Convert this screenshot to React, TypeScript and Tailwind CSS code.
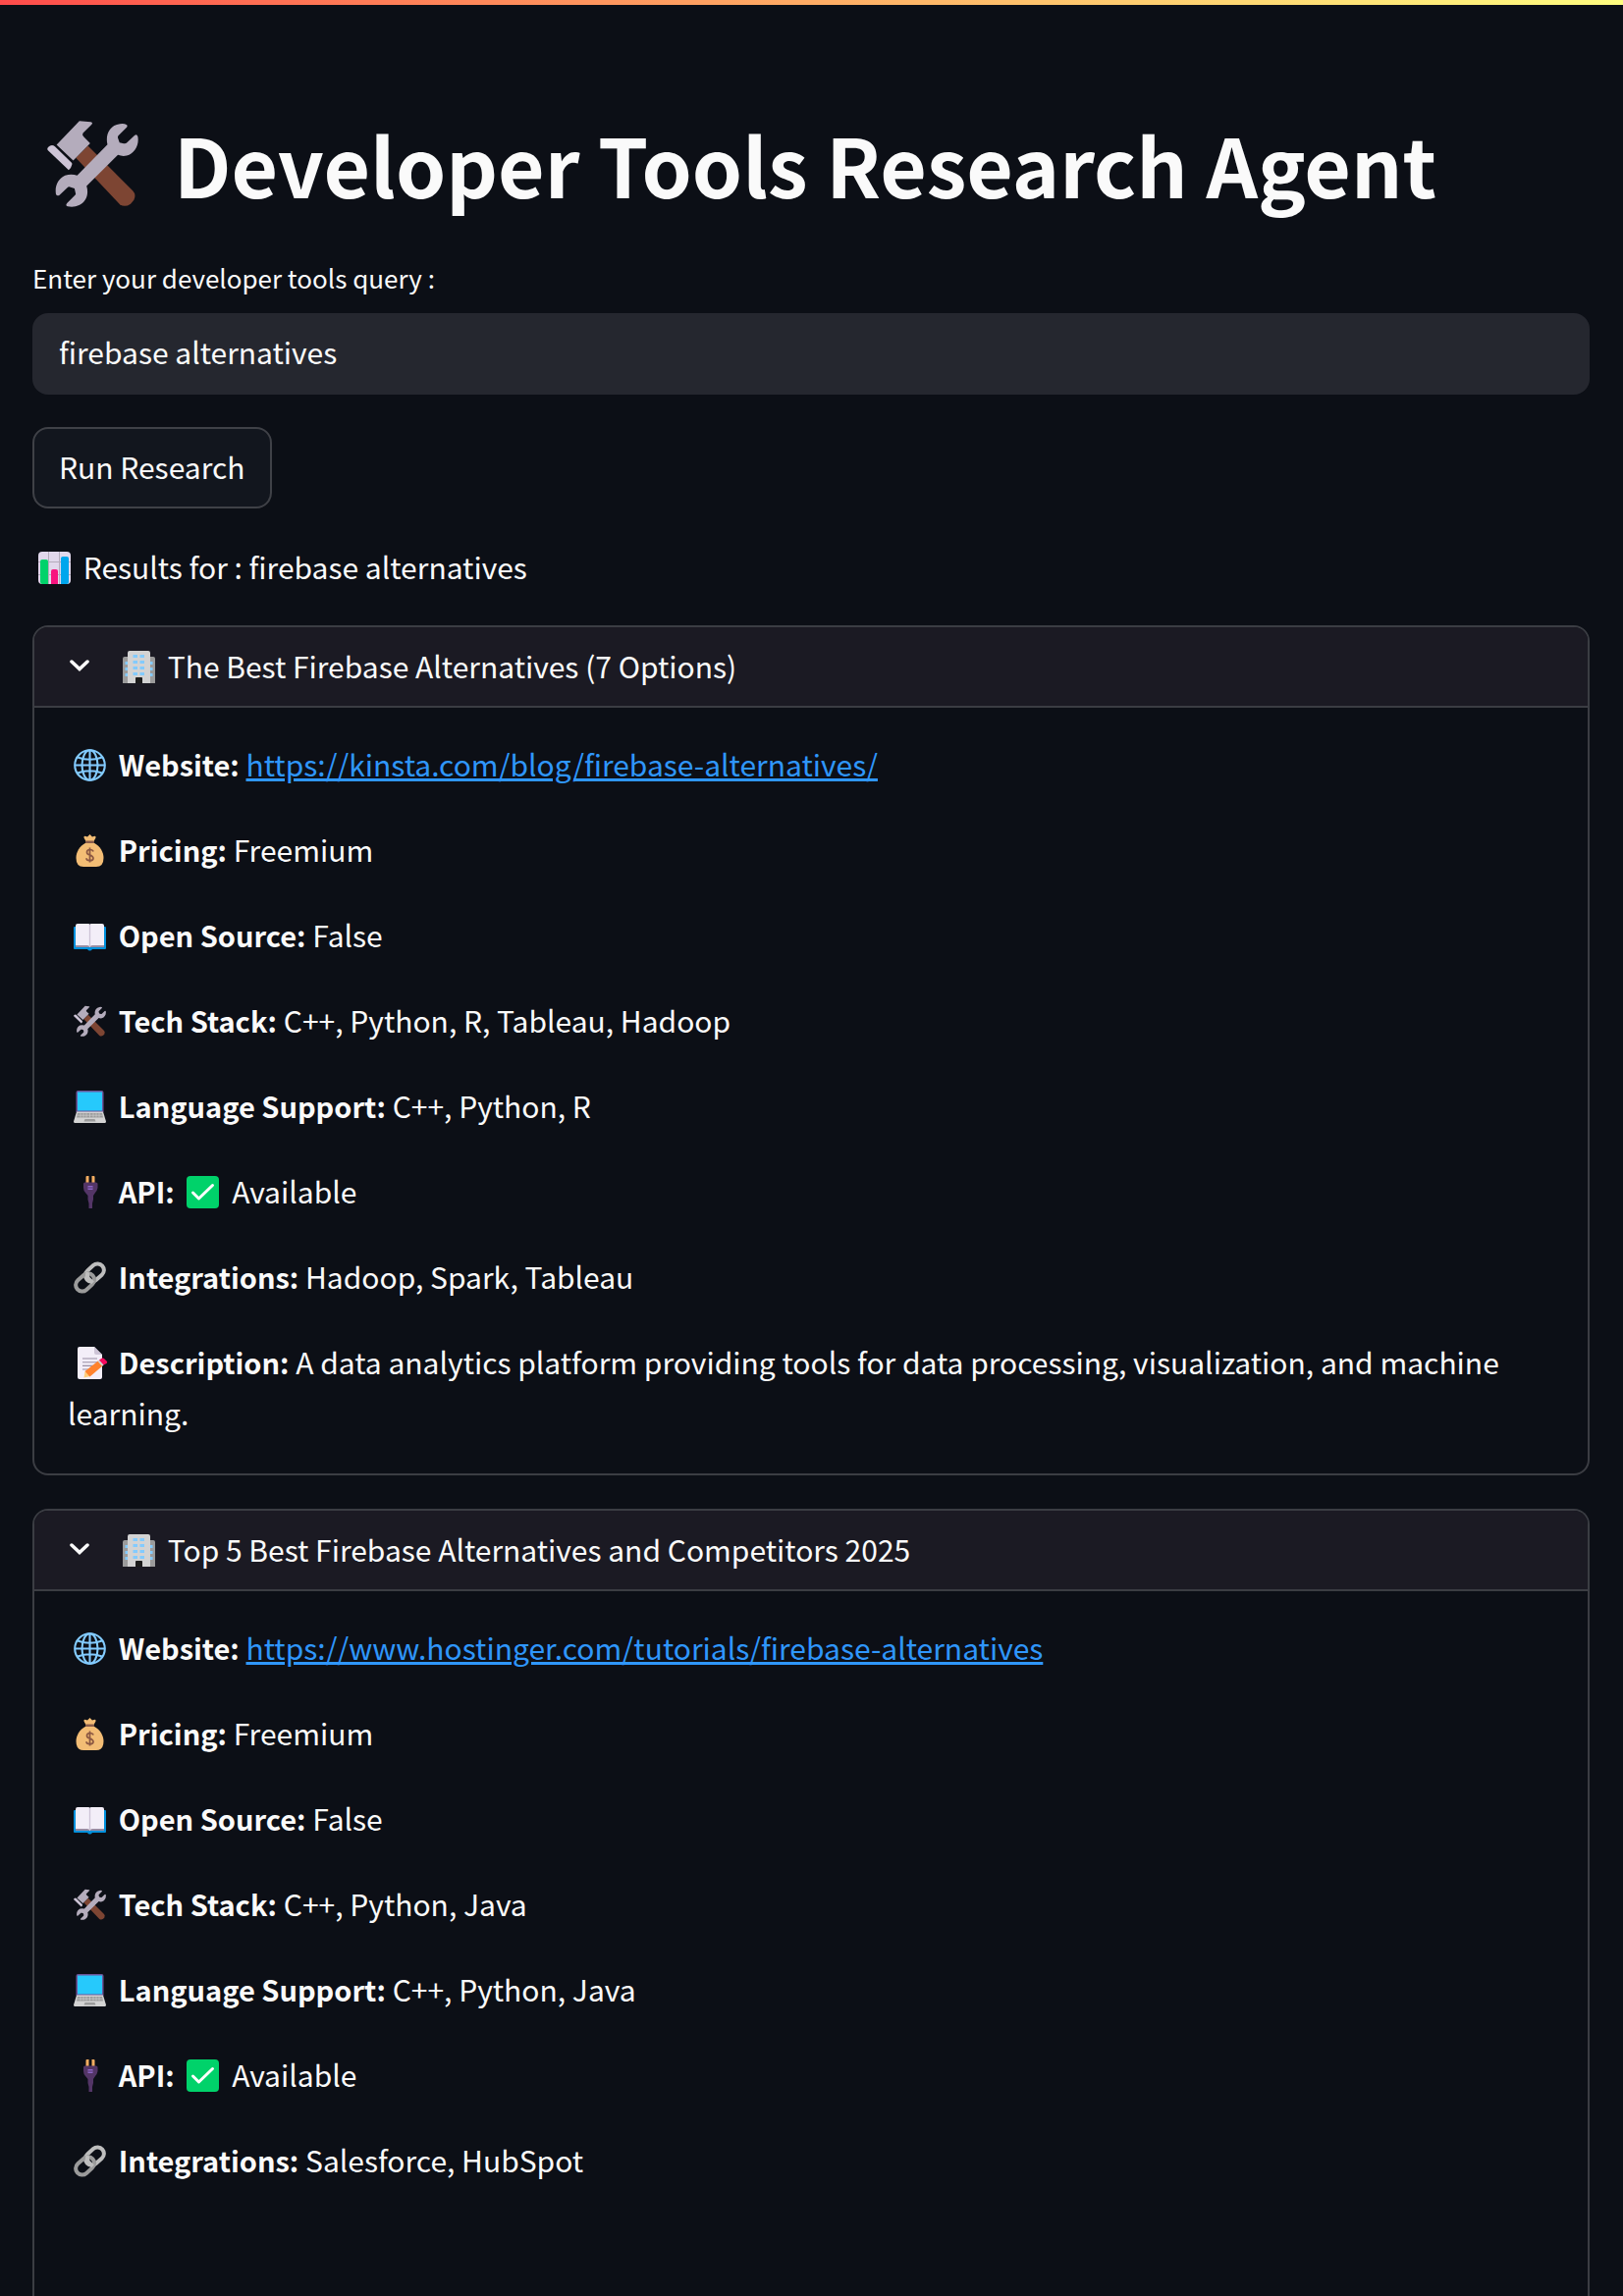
import React from "react";

const iconClass = "mx-[6px] inline-block size-[33px] align-[-5px]";

function Tools({ className = iconClass }: { className?: string }) {
  return (
    <svg className={className} viewBox="84 68 280 280" aria-hidden="true">
      <path d="M172 188 209 151 347 289Q358 301 350 317L340 329Q323 341 307 331Z" fill="#7d4533" />
      <path d="M183 75 218 78Q226 80 220 86L194 112Q190 118 196 123L216 143 164 196 113 148Z" fill="#b4acbc" />
      <path d="M87 155Q98 145 108 153L159 203Q162 206 159 212 157 222 150 225L86 164Q83 160 87 155Z" fill="#cdc4d6" />
      <path
        d="M269 147C262 118 275 88 307 84Q320 82 327 86 332 89 328 94L303 119Q300 122 301 127L306 141 319 144Q325 145 328 142L352 119Q359 114 362 122C367 148 353 174 328 181Q315 184 301 179L205 274C213 300 203 323 182 333Q166 341 147 337 139 334 145 327L169 303Q173 299 171 295L168 282 154 277Q149 276 145 280L122 302Q114 307 111 299C107 275 117 252 139 242Q158 236 176 242Z"
        fill="#b4acbc"
      />
    </svg>
  );
}

function Chart() {
  return (
    <svg className={iconClass} viewBox="0 0 33 33" aria-hidden="true">
      <rect width="33" height="33" rx="4" fill="#e1d8ec" />
      <path d="M0 10.500H33M0 23.500H33M10.500 0V33M21.500 0V33" stroke="#b4acbc" strokeWidth="1" />
      <path d="M2 10Q2 8 4 8H8Q10 8 10 10V33H4Q2 33 2 31Z" fill="#00d26a" />
      <path d="M13 20Q13 18 15 18H18Q20 18 20 20V33H13Z" fill="#f8137f" />
      <path d="M23 7Q23 5 25 5H29Q31 5 31 7V31Q31 33 29 33H23Z" fill="#00a6ed" />
    </svg>
  );
}

function Building() {
  return (
    <svg className={iconClass} viewBox="0 0 33 33" aria-hidden="true">
      <path d="M0 8Q0 6 2 6H31Q33 6 33 8V33H0Z" fill="#9b9b9b" />
      <path d="M5 2Q5 0 7 0H26Q28 0 28 2V33H20V28Q20 27 19 27H14Q13 27 13 28V33H5Z" fill="#d3d3d3" />
      <path d="M13 28Q13 27 14 27H19Q20 27 20 28V33H13Z" fill="#1c1c1c" />
      <path
        d="M10.500 4h4.500v3h-4.500zM17.500 4h4.500v3h-4.500zM10.500 10h4.500v3h-4.500zM17.500 10h4.500v3h-4.500zM10.500 16h4.500v3h-4.500zM17.500 16h4.500v3h-4.500zM10.500 22h4.500v3h-4.500zM17.500 22h4.500v3h-4.500zM2.500 11H5v3H2.500zM2.500 17H5v3H2.500zM2.500 23H5v3H2.500zM28 11h2.500v3H28zM28 17h2.500v3H28zM28 23h2.500v3H28z"
        fill="#83cbff"
      />
    </svg>
  );
}

function Globe() {
  return (
    <svg className={iconClass} viewBox="0 0 33 33" fill="none" stroke="#83cbff" strokeWidth="2.100" aria-hidden="true">
      <circle cx="16.500" cy="16.500" r="15.300" />
      <ellipse cx="16.500" cy="16.500" rx="8" ry="15.300" />
      <path d="M16.500 1V32M1 16.500H32M4 8.500Q16.500 13 29 8.500M4 24.500Q16.500 20 29 24.500" />
    </svg>
  );
}

function MoneyBag() {
  return (
    <svg className={iconClass} viewBox="0 0 33 33" aria-hidden="true">
      <path d="M13 8 10.500 3.500Q10 1 12.500 2L14 2.500 16.500 0 19 2.500 20.500 2Q23 1 22.500 3.500L20 8Z" fill="#f3bd75" />
      <path d="M12.500 8.500C6 12 2.500 18 2.500 24Q2.500 33 10 33H23Q30.500 33 30.500 24C30.500 18 27 12 20.500 8.500Z" fill="#f3bd75" />
      <rect x="12" y="6.500" width="9" height="2.500" rx="1.200" fill="#8b5e4b" />
      <path d="M20 17.500Q19.500 15.500 16.500 15.500T13.500 18.300Q13.500 20.300 16.500 21T20 24.200Q20 26.700 16.500 26.700T13 24.300M16.500 13.500V28.500" fill="none" stroke="#8b5742" strokeWidth="1.700" />
    </svg>
  );
}

function Book() {
  return (
    <svg className={iconClass} viewBox="0 0 33 33" aria-hidden="true">
      <path d="M0 8Q0 7 1 7H32Q33 7 33 8V29Q33 30 32 30H19Q18 31.500 16.500 31.500T14 30H1Q0 30 0 29Z" fill="#0090dc" />
      <path d="M2 6V28H31V6Z" fill="#998ea4" />
      <path d="M2 6Q2 4 4 4H15Q16.500 4 16.500 5 16.500 4 18 4H29Q31 4 31 6V26H19Q17 26 16.500 28 16 26 14 26H2Z" fill="#f3eef8" />
      <path d="M16.500 5V27" stroke="#cdc4d6" strokeWidth="1.300" />
    </svg>
  );
}

function Laptop() {
  return (
    <svg className={iconClass} viewBox="0 0 33 33" aria-hidden="true">
      <path d="M2.500 2Q2.500 0 4.500 0H28.500Q30.500 0 30.500 2V22H2.500Z" fill="#6d5599" />
      <rect x="4" y="1.500" width="25" height="19" fill="#26c9fc" />
      <path d="M3 21.500H30L33 31.500Q33 33 31.500 33H1.500Q0 33 0 31.500Z" fill="#d3d3d3" />
      <path d="M4 23H29L30 27.500H3Z" fill="#9b9b9b" />
      <path d="M3.500 25.200H29.500M7 23V27.500M10 23V27.500M13 23V27.500M16.500 23V27.500M20 23V27.500M23 23V27.500M26 23V27.500" stroke="#d3d3d3" strokeWidth=".6" />
      <path d="M11.500 29H21.500L22.500 31.500H10.500Z" fill="#9b9b9b" />
    </svg>
  );
}

function Plug() {
  return (
    <svg className={iconClass} viewBox="0 0 33 33" aria-hidden="true">
      <path d="M12.500 1Q12.500 0 13.500 0H15.500V7H12.500ZM18.500 0H20.500Q21.500 0 21.500 1V7H18.500Z" fill="#f3ad61" />
      <path d="M10 8Q10 6.500 11.500 6.500H22.500Q24.500 6.500 24.500 8V12Q24 15 22 17L20 20V24L19 28V33H15.500V28L14.500 24V20L12 17Q10 15 10 12Z" fill="#533566" />
      <path d="M14.500 10H19.500V14H14.500Z" fill="#8d65c5" />
      <path d="M14.500 12H19.500" stroke="#533566" strokeWidth="1" />
    </svg>
  );
}

function Chain() {
  return (
    <svg className={iconClass} viewBox="0 0 33 33" fill="none" strokeWidth="4" aria-hidden="true">
      <rect x="-10.500" y="-6.500" width="21" height="13" rx="6.500" transform="translate(21.400 11.600) rotate(-42)" stroke="#bebebe" />
      <rect x="-10.500" y="-6.500" width="21" height="13" rx="6.500" transform="translate(11.600 21.400) rotate(-42)" stroke="#9b9b9b" />
      <path d="M19.500 21.800 15 17.300Q13 14.500 14.500 11" stroke="#bebebe" />
    </svg>
  );
}

function Memo() {
  return (
    <svg className={iconClass} viewBox="0 0 33 33" overflow="visible" aria-hidden="true">
      <path d="M4 2Q4 0 6 0H21L29 8V31Q29 33 27 33H6Q4 33 4 31Z" fill="#f3eef8" />
      <path d="M21 0 29 8H23Q21 8 21 6Z" fill="#cdc4d6" />
      <path d="M9 12H24M9 15.700H24M9 19.400H21M9 23H17" stroke="#998ea4" strokeWidth="1.100" />
      <path d="M11.500 25 10.500 31.500 17 30Z" fill="#ffce7c" />
      <path d="M11.500 25 25.500 14 30 19 16.500 30.500Z" fill="#ff822d" />
      <path d="M24.500 14.800 26.500 13.200 31 18 29 19.800Z" fill="#d3d3d3" />
      <path d="M26 13.500 28.500 11.800Q30 11 31.500 12.500L34 15Q34.500 16 33.500 17L30.500 18.500Z" fill="#f70a5d" />
    </svg>
  );
}

function Check() {
  return (
    <svg className={iconClass} viewBox="0 0 33 33" aria-hidden="true">
      <rect width="33" height="33" rx="4" fill="#00d26a" />
      <path d="M6.500 17 12.500 23 26.500 9.500" fill="none" stroke="#fff" strokeWidth="3" strokeLinecap="round" strokeLinejoin="round" />
    </svg>
  );
}

type Company = {
  name: string;
  website: string;
  pricing: string;
  openSource: string;
  techStack: string;
  languages: string;
  integrations: string;
  description?: string;
};

const companies: Company[] = [
  {
    name: "The Best Firebase Alternatives (7 Options)",
    website: "https://kinsta.com/blog/firebase-alternatives/",
    pricing: "Freemium",
    openSource: "False",
    techStack: "C++, Python, R, Tableau, Hadoop",
    languages: "C++, Python, R",
    integrations: "Hadoop, Spark, Tableau",
    description:
      "A data analytics platform providing tools for data processing, visualization, and machine learning.",
  },
  {
    name: "Top 5 Best Firebase Alternatives and Competitors 2025",
    website: "https://www.hostinger.com/tutorials/firebase-alternatives",
    pricing: "Freemium",
    openSource: "False",
    techStack: "C++, Python, Java",
    languages: "C++, Python, Java",
    integrations: "Salesforce, HubSpot",
  },
];

function Field({ icon, label, children }: { icon: React.ReactNode; label: string; children: React.ReactNode }) {
  return (
    <p>
      {icon} <strong className="text-[29px] font-bold">{label}:</strong> {children}
    </p>
  );
}

function CompanyCard({ company, className }: { company: Company; className: string }) {
  return (
    <details open className={`overflow-hidden border-2 border-[#3b3d43] ${className}`}>
      <summary className="flex h-[82px] cursor-pointer list-none items-center border-b-2 border-[#3b3d43] bg-[#1b1a23] pb-[2px] pl-[36px]">
        <svg className="mr-[28px] h-[12px] w-[20px]" viewBox="0 0 20 12" fill="none" stroke="#fafafa" strokeWidth="3.500" aria-hidden="true">
          <path d="M2 2 10 9.500 18 2" strokeLinecap="round" />
        </svg>
        <span>
          <Building /> {company.name}
        </span>
      </summary>
      <div className="flex flex-col gap-[35px] px-[34px] pt-[31px] pb-[36px]">
        <Field icon={<Globe />} label="Website">
          <a href={company.website} className="text-[#2f96fb] underline">
            {company.website}
          </a>
        </Field>
        <Field icon={<MoneyBag />} label="Pricing">{company.pricing}</Field>
        <Field icon={<Book />} label="Open Source">{company.openSource}</Field>
        <Field icon={<Tools />} label="Tech Stack">{company.techStack}</Field>
        <Field icon={<Laptop />} label="Language Support">{company.languages}</Field>
        <Field icon={<Plug />} label="API">
          <Check /> Available
        </Field>
        <Field icon={<Chain />} label="Integrations">{company.integrations}</Field>
        {company.description && (
          <Field icon={<Memo />} label="Description">{company.description}</Field>
        )}
      </div>
    </details>
  );
}

export default function App() {
  return (
    <div className="flex h-screen flex-col overflow-hidden bg-[#0c0f16] font-['Noto_Sans_CJK_SC',sans-serif] text-[30px] leading-[52px] text-[#fafafa]">
      <div className="h-[5px] shrink-0 bg-linear-to-r from-[#ff4b4b] to-[#fffd80]" />
      <main className="flex flex-1 flex-col pt-[108px] pr-[34px] pl-[33px]">
        <h1 className="flex items-center text-[82px] leading-[108px] font-bold">
          <Tools className="mr-[36px] ml-[15px] size-[93px]" />
          Developer Tools Research Agent
        </h1>
        <label htmlFor="query" className="mt-[44px] text-[26px] leading-[36px]">
          Enter your developer tools query :
        </label>
        <input
          id="query"
          type="text"
          defaultValue="firebase alternatives"
          className="mt-[18px] h-[83px] w-full rounded-2xl bg-[#25272f] px-[27px] pb-[5px] outline-none"
        />
        <button
          type="button"
          className="mt-[33px] h-[83px] self-start rounded-2xl border-2 border-[#3f4147] bg-[#12161e] px-[25px] pb-[4px]"
        >
          Run Research
        </button>
        <p className="mt-[33px]">
          <Chart /> Results for : firebase alternatives
        </p>
        <CompanyCard company={companies[0]} className="mt-[34px] shrink-0 rounded-2xl" />
        <CompanyCard company={companies[1]} className="mt-[34px] flex-1 rounded-t-2xl border-b-0" />
      </main>
    </div>
  );
}
